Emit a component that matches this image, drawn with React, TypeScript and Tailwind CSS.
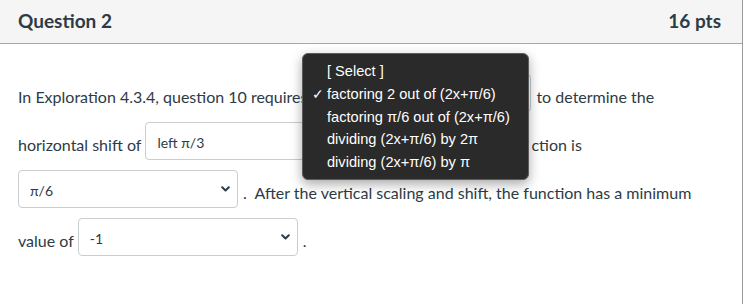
import React from 'react';

const lato = { fontFamily: 'Lato, "Open Sans", sans-serif' };

function Chevron() {
  return (
    <svg width="9" height="6" viewBox="0 0 9 6" className="shrink-0">
      <path d="M1.2 1.2 4.5 4.5 7.8 1.2" fill="none" stroke="#2d3b45" strokeWidth="2" strokeLinecap="round" strokeLinejoin="round" />
    </svg>
  );
}

function FakeSelect({ value }: { value: string }) {
  return (
    <div className="ml-[4px] mr-[5px] flex h-[38px] w-[220px] shrink-0 items-center justify-between rounded-[4px] border border-[#c7cdd1] bg-white pl-[11px] pr-[7px]">
      <span className="pt-[3px] text-[14px] leading-[20px] text-[#2d3b45]">{value}</span>
      <Chevron />
    </div>
  );
}

const options = [
  '[ Select ]',
  'factoring 2 out of (2x+π/6)',
  'factoring π/6 out of (2x+π/6)',
  'dividing (2x+π/6) by 2π',
  'dividing (2x+π/6) by π',
];

export default function App() {
  return (
    <div className="relative h-[304px] w-[744px] overflow-hidden bg-white text-[#2d3b45]" style={lato}>
      <div className="h-full w-[743px] border-r border-[#9a9a9a]">
        <div className="flex h-[44px] items-center justify-between border-b border-[#a8a8a8] bg-[#f5f5f5] pl-[18px] pr-[21px]">
          <h2 className="text-[19px] font-bold">Question 2</h2>
          <span className="text-[19px] font-bold">16 pts</span>
        </div>

        <div className="pl-[18px] pt-[25px] text-[16px]">
          <div className="flex h-[48px] items-center whitespace-nowrap">
            <span className="pt-2">In Exploration 4.3.4, question 10 requires</span>
            <FakeSelect value="factoring 2 out of (2x+π/6)" />
            <span className="pt-2">to determine the</span>
          </div>
          <div className="flex h-[48px] items-center whitespace-nowrap">
            <span className="pt-2">horizontal shift of</span>
            <FakeSelect value="left π/3" />
            {/* this part sits under the open list */}
            <span className="w-[161px] shrink-0 overflow-hidden pt-2">. The midline of the fu</span>
            <span className="pt-2">ction is</span>
          </div>
          <div className="-ml-[4px] flex h-[48px] items-center whitespace-nowrap">
            <FakeSelect value="π/6" />
            <span className="pt-2">.&nbsp; After the vertical scaling and shift, the function has a minimum</span>
          </div>
          <div className="flex h-[48px] items-center whitespace-nowrap">
            <span className="pt-2">value of</span>
            <FakeSelect value="-1" />
            <span className="pt-2">.</span>
          </div>
        </div>
      </div>

      {/* open native dropdown list */}
      <div
        className="absolute left-[302px] top-[53px] w-[227px] rounded-[6px] border border-[#5c5c5c] bg-[#2a2a2a] pb-[5px] pt-[7px] text-[14.6px] text-white shadow-[0_4px_12px_rgba(0,0,0,0.35)]"
        style={{ fontFamily: '"Liberation Sans", Arial, sans-serif' }}
      >
        {options.map((o, i) => (
          <div key={o} className="relative flex h-[22.6px] items-center pl-[24px]">
            {i === 1 && <span className="absolute left-[9px] text-[14px]">✓</span>}
            {o}
          </div>
        ))}
      </div>
    </div>
  );
}
